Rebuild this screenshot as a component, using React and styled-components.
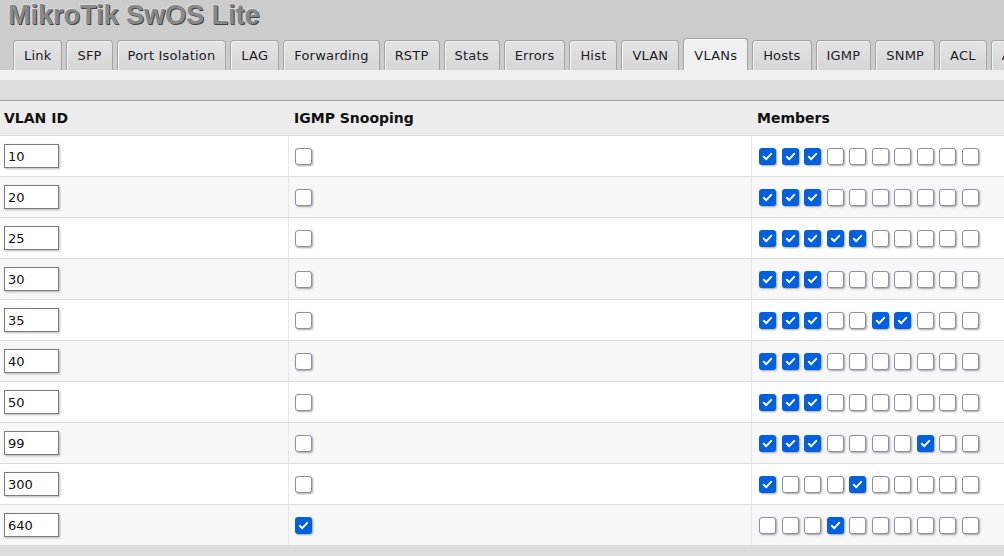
import React from "react"
import styled, { createGlobalStyle } from "styled-components"

const GlobalStyle = createGlobalStyle`
  html, body {
    margin: 0;
    padding: 0;
    background: #dcdcdc;
    overflow: hidden;
  }
  body {
    font-family: "DejaVu Sans", Verdana, sans-serif;
    font-size: 13px;
    color: #111;
  }
`

const tabs = [
  "Link", "SFP", "Port Isolation", "LAG", "Forwarding", "RSTP", "Stats",
  "Errors", "Hist", "VLAN", "VLANs", "Hosts", "IGMP", "SNMP", "ACL", "Auth",
]

const vlans = [
  { id: "10", igmp: false, members: "1110000000" },
  { id: "20", igmp: false, members: "1110000000" },
  { id: "25", igmp: false, members: "1111100000" },
  { id: "30", igmp: false, members: "1110000000" },
  { id: "35", igmp: false, members: "1110011000" },
  { id: "40", igmp: false, members: "1110000000" },
  { id: "50", igmp: false, members: "1110000000" },
  { id: "99", igmp: false, members: "1110000100" },
  { id: "300", igmp: false, members: "1000100000" },
  { id: "640", igmp: true, members: "0001000000" },
]

const Page = styled.div`
  min-height: 100vh;
  background: #dcdcdc;
`

const Header = styled.header`
  background: #cccccc;
  height: 70px;
  display: flex;
  flex-direction: column;
`

const Title = styled.h1`
  margin: 0;
  height: 40px;
  padding-left: 8px;
  font-family: "Liberation Sans", Arial, sans-serif;
  font-weight: bold;
  font-size: 27px;
  line-height: 30px;
  color: #888888;
  text-shadow: 1px 1px 0 #454545, -1px -1px 0 #dadada;
  white-space: nowrap;
`

const TabBar = styled.nav`
  display: flex;
  align-items: flex-end;
  gap: 4px;
  height: 30px;
  padding-left: 13px;
  white-space: nowrap;
`

const Tab = styled.div`
  flex: none;
  box-sizing: border-box;
  height: ${({ active }) => (active ? "32px" : "30px")};
  padding: 0 10px;
  display: flex;
  align-items: center;
  padding-top: ${({ active }) => (active ? "1px" : "0")};
  border: 1px solid #a4a4a4;
  border-bottom: none;
  border-radius: 4px 4px 0 0;
  background: ${({ active }) =>
    active ? "#f0f0f0" : "linear-gradient(#e4e4e4, #d6d6d6)"};
  box-shadow: inset 1px 1px 0 #f4f4f4;
  color: #1c1c28;
  font-size: 13px;
  letter-spacing: 0.2px;
`

const Band = styled.div`
  height: 10px;
  background: #f0f0f0;
`

const Toolbar = styled.div`
  height: 20px;
  background: #dcdcdc;
`

const Table = styled.div`
  border-top: 1px solid #a2a2a2;
`

const HeadRow = styled.div`
  display: grid;
  grid-template-columns: 289px 463px 1fr;
  height: 34px;
  background: #ececec;
  border-bottom: 1px solid #dcdcdc;
`

const HeadCell = styled.div`
  display: flex;
  align-items: center;
  padding-left: ${({ pad }) => pad}px;
  font-weight: bold;
  font-size: 14px;
  color: #111;
`

const Row = styled.div`
  display: grid;
  grid-template-columns: 289px 463px 1fr;
  height: 40px;
  background: ${({ odd }) => (odd ? "#f7f7f7" : "#ffffff")};
  border-bottom: 1px solid #dcdcdc;
`

const Cell = styled.div`
  box-sizing: border-box;
  display: flex;
  align-items: center;
  padding-left: ${({ pad }) => pad}px;
  border-right: ${({ divider }) => (divider ? "1px solid #e8e8e8" : "none")};
`

const IdInput = styled.input`
  box-sizing: border-box;
  width: 55px;
  height: 24px;
  margin: 0;
  padding: 0 3px;
  border: 1px solid #7c7c7c;
  box-shadow: 1px 1px 2px rgba(0, 0, 0, 0.28);
  background: #fff;
  font-family: "DejaVu Sans", Verdana, sans-serif;
  font-size: 13px;
  color: #111;
  outline: none;
`

const Members = styled.div`
  display: flex;
  gap: 5.5px;
`

const Box = styled.span`
  box-sizing: border-box;
  width: 17px;
  height: 17px;
  border-radius: 3px;
  display: flex;
  align-items: center;
  justify-content: center;
  border: ${({ checked }) => (checked ? "none" : "1px solid #8f8f9d")};
  background: ${({ checked }) => (checked ? "#0060df" : "#fff")};
  box-shadow: 1px 1px 2px rgba(0, 0, 0, 0.35);
`

const Check = ({ checked }) => (
  <Box checked={checked}>
    {checked && (
      <svg width="11" height="11" viewBox="0 0 11 11">
        <path
          d="M1.8 5.8 L4.3 8.2 L9.2 2.8"
          fill="none"
          stroke="#fff"
          strokeWidth="2"
          strokeLinecap="round"
          strokeLinejoin="round"
        />
      </svg>
    )}
  </Box>
)

const App = () => {
  return (
    <Page>
      <GlobalStyle />
      <Header>
        <Title>MikroTik SwOS Lite</Title>
        <TabBar>
          {tabs.map((t) => (
            <Tab key={t} active={t === "VLANs"}>
              {t}
            </Tab>
          ))}
        </TabBar>
      </Header>
      <Band />
      <Toolbar />
      <Table>
        <HeadRow>
          <HeadCell pad={4}>VLAN ID</HeadCell>
          <HeadCell pad={5}>IGMP Snooping</HeadCell>
          <HeadCell pad={5}>Members</HeadCell>
        </HeadRow>
        {vlans.map((v, i) => (
          <Row key={v.id} odd={i % 2 === 1}>
            <Cell pad={4} divider>
              <IdInput defaultValue={v.id} />
            </Cell>
            <Cell pad={6} divider>
              <Check checked={v.igmp} />
            </Cell>
            <Cell pad={7}>
              <Members>
                {v.members.split("").map((m, j) => (
                  <Check key={j} checked={m === "1"} />
                ))}
              </Members>
            </Cell>
          </Row>
        ))}
      </Table>
    </Page>
  )
}

export default App
